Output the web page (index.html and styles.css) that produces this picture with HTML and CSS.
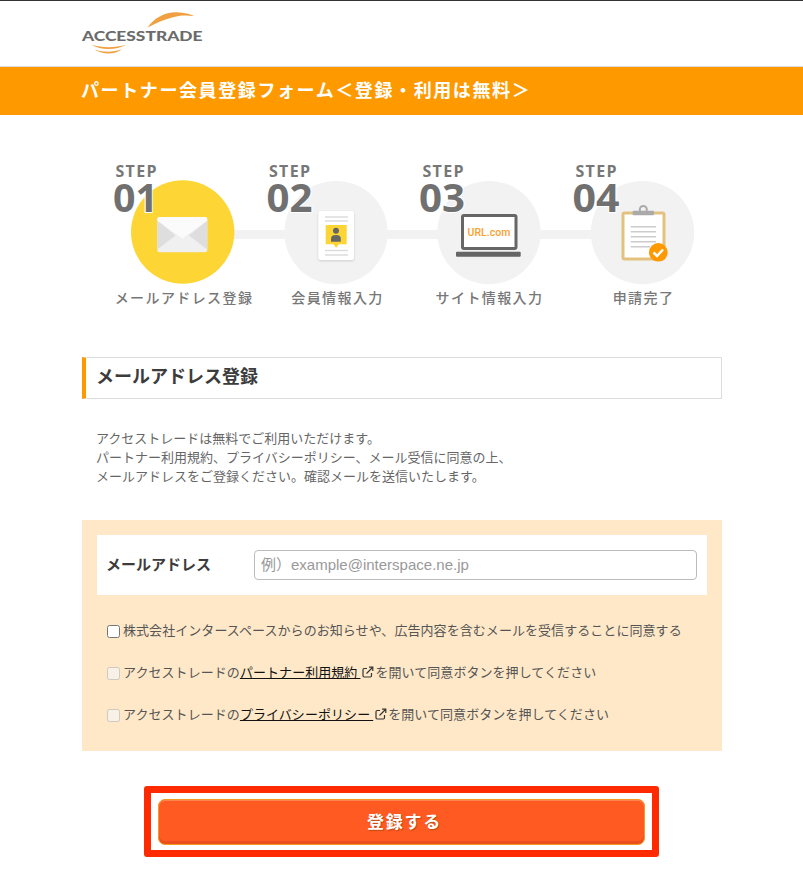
FILE: index.html
```html
<!DOCTYPE html>
<html lang="ja">
<head>
<meta charset="utf-8">
<title>パートナー会員登録フォーム</title>
<link rel="stylesheet" href="styles.css">
</head>
<body>
<header class="site-header">
  <svg class="logo" viewBox="82 8 122 50" width="122" height="50" aria-label="ACCESSTRADE">
    <path class="logo-swoosh" d="M147.500 27.500C154 18 165 12 177 12.300C184 12.500 190 14 194 16C186 15 179 15.200 172 17.500C162 20.500 154 24 147.500 27.500Z"/>
    <text class="logo-text" x="82" y="40.700" textLength="120.500" lengthAdjust="spacingAndGlyphs">ACCESSTRADE</text>
    <path class="logo-swoosh" d="M91 44.500C102 48 115 48 126.500 44.500C116 50.500 101 50.500 91 44.500Z"/>
    <path class="logo-swoosh" d="M94.500 49.500C104 52.500 113 52.500 122 49C115 55 103 55 94.500 49.500Z"/>
  </svg>
</header>
<div class="title-band"><h1 class="title-text">パートナー会員登録フォーム＜登録・利用は無料＞</h1></div>
<main class="content">
  <svg class="steps" viewBox="82 150 640 170" width="640" height="170">
    <rect class="connector" x="183" y="230" width="460" height="9"/>
    <circle class="disc-active" cx="182.700" cy="232" r="51.700"/>
    <circle class="disc" cx="336" cy="232.600" r="51.700"/>
    <circle class="disc" cx="489" cy="232.600" r="51.700"/>
    <circle class="disc" cx="642.500" cy="232.600" r="51.700"/>

    <text class="step-word" x="115.500" y="177" textLength="41">STEP</text>
    <text class="step-num" x="113" y="212" textLength="45" lengthAdjust="spacingAndGlyphs">01</text>
    <text class="step-word" x="269" y="177" textLength="41">STEP</text>
    <text class="step-num" x="266.500" y="212" textLength="46" lengthAdjust="spacingAndGlyphs">02</text>
    <text class="step-word" x="422.500" y="177" textLength="41">STEP</text>
    <text class="step-num" x="419" y="212" textLength="46" lengthAdjust="spacingAndGlyphs">03</text>
    <text class="step-word" x="575.500" y="177" textLength="41">STEP</text>
    <text class="step-num" x="572.500" y="212" textLength="47" lengthAdjust="spacingAndGlyphs">04</text>

    <!-- envelope -->
    <rect class="env-body" x="157.300" y="217" width="50" height="35.300" rx="2.500"/>
    <path class="env-side" d="M157.300 220.500L175.500 235.500L157.300 249.500ZM207.300 220.500L189 235.500L207.300 249.500Z"/>
    <path class="env-flap" d="M159 217H205.500C206.500 217 207.300 218 207.300 219.500V220.500L182.300 238.500L157.300 220.500V219.500C157.300 218 158 217 159 217Z"/>

    <!-- member sheet -->
    <rect class="sheet" x="318.300" y="211" width="35.700" height="49" rx="2"/>
    <path class="sheet-line" d="M325 217H348M325 221H348M325 250.500H348M325 255H348"/>
    <path class="badge" d="M325.700 225H346.700V244.300H339L336.200 247.800L333.400 244.300H325.700Z"/>
    <circle class="person" cx="336" cy="230.700" r="3"/>
    <path class="person" d="M331 241.700V238.500C331 236 333 235 336 235C339 235 340.800 236 340.800 238.500V241.700Z"/>

    <!-- laptop -->
    <rect class="screen" x="462.500" y="215.500" width="53.500" height="33" rx="1.500"/>
    <text class="url-text" x="467.500" y="236" textLength="43">URL.com</text>
    <rect class="laptop-base" x="456" y="251.800" width="64.700" height="5" rx="1"/>

    <!-- clipboard -->
    <rect class="board" x="623" y="213" width="41" height="46" rx="1.500"/>
    <circle class="clip-ring" cx="643.300" cy="209.500" r="3.500"/>
    <rect class="clip" x="632.700" y="210.800" width="21.300" height="4.400" rx="1"/>
    <path class="board-line" d="M630.700 226.700H656M630.700 231.700H656M630.700 236.700H656M630.700 241.700H656M630.700 246.700H650"/>
    <circle class="check-disc" cx="658.300" cy="252.300" r="9.300"/>
    <path class="check-mark" d="M653.500 252.500L657 256L663 249.500"/>

    <text class="step-label" x="184" y="303">メールアドレス登録</text>
    <text class="step-label" x="337.500" y="303">会員情報入力</text>
    <text class="step-label" x="489.500" y="303">サイト情報入力</text>
    <text class="step-label" x="643.500" y="303">申請完了</text>
  </svg>

  <h2 class="section-title">メールアドレス登録</h2>
  <p class="intro">アクセストレードは無料でご利用いただけます。<br>パートナー利用規約、プライバシーポリシー、メール受信に同意の上、<br>メールアドレスをご登録ください。確認メールを送信いたします。</p>

  <form class="form-panel">
    <div class="email-row">
      <label class="email-label" for="email">メールアドレス</label>
      <input class="email-input" id="email" type="email" placeholder="例）example@interspace.ne.jp">
    </div>
    <label class="agree"><input class="agree-box" type="checkbox"><span class="agree-text">株式会社インタースペースからのお知らせや、広告内容を含むメールを受信することに同意する</span></label>
    <label class="agree"><input class="agree-box" type="checkbox" disabled><span class="agree-text">アクセストレードの<a class="doc-link" href="#">パートナー利用規約 <svg class="ext-icon" viewBox="0 0 12 12" width="12" height="12"><path d="M5 2.500H2.200C1.500 2.500 1 3 1 3.700V9.800C1 10.500 1.500 11 2.200 11H8.300C9 11 9.500 10.500 9.500 9.800V7"/><path d="M4.500 7.500L10 2M7 1.200H10.800V5"/></svg></a>を開いて同意ボタンを押してください</span></label>
    <label class="agree"><input class="agree-box" type="checkbox" disabled><span class="agree-text">アクセストレードの<a class="doc-link" href="#">プライバシーポリシー <svg class="ext-icon" viewBox="0 0 12 12" width="12" height="12"><path d="M5 2.500H2.200C1.500 2.500 1 3 1 3.700V9.800C1 10.500 1.500 11 2.200 11H8.300C9 11 9.500 10.500 9.500 9.800V7"/><path d="M4.500 7.500L10 2M7 1.200H10.800V5"/></svg></a>を開いて同意ボタンを押してください</span></label>
  </form>

  <div class="submit-frame"><button class="submit" type="button">登録する</button></div>
</main>
</body>
</html>
```
FILE: styles.css
```css
* { box-sizing: border-box; }
html, body { margin: 0; padding: 0; }
body {
  background: #fff;
  color: #555;
  font-family: "Noto Sans CJK JP", "Noto Sans", sans-serif;
  font-size: 13px;
  border-top: 1px solid #333;
}
.site-header {
  height: 66px;
  padding: 7px 0 0 82px;
  border-bottom: 1px solid #ddd;
}
.logo { display: block; }
.logo-swoosh { fill: #f0a040; }
.logo-text {
  font-family: "Lato", sans-serif;
  font-weight: 900;
  font-size: 14px;
  fill: #6b6b6b;
}
.title-band {
  height: 48px;
  background: #ff9900;
  padding: 0 0 4px 81px;
  display: flex;
  align-items: center;
}
.title-text {
  margin: 0;
  color: #fff;
  font-size: 18px;
  font-weight: 700;
  letter-spacing: 1.600px;
  line-height: 1;
}
.content { width: 640px; margin: 35px 0 0 82px; }
.steps { display: block; }
.connector, .disc { fill: #f2f2f2; }
.disc-active { fill: #fdd535; }
.step-word {
  font-family: "Open Sans", sans-serif;
  font-weight: 700;
  font-size: 16px;
  fill: #777;
}
.step-num {
  font-family: "Open Sans", sans-serif;
  font-weight: 700;
  font-size: 39px;
  fill: #707070;
  stroke: #fff;
  stroke-width: 2px;
  paint-order: stroke;
}
.env-body { fill: #f0f0f0; }
.env-side { fill: #dedede; }
.env-flap { fill: #fbfbfb; }
.sheet { fill: #fff; filter: drop-shadow(0 1px 1px rgba(0,0,0,.15)); }
.sheet-line { stroke: #ddd; stroke-width: 1.500; fill: none; }
.badge { fill: #fdd535; }
.person { fill: #666; }
.screen { fill: #fff; stroke: #666; stroke-width: 3; }
.url-text {
  font-family: "Roboto", sans-serif;
  font-weight: 500;
  font-size: 10.500px;
  fill: #f9a030;
}
.laptop-base { fill: #666; }
.board { fill: #fff; stroke: #e3c27f; stroke-width: 3; }
.clip-ring { fill: none; stroke: #aaa; stroke-width: 2; }
.clip { fill: #aaa; }
.board-line { stroke: #ccc; stroke-width: 1.500; fill: none; }
.check-disc { fill: #f90; }
.check-mark { stroke: #fff; stroke-width: 2.500; fill: none; }
.step-label {
  font-size: 14px;
  letter-spacing: 1.400px;
  fill: #777;
  text-anchor: middle;
  font-weight: 500;
}
.section-title {
  margin: 37px 0 0;
  height: 42px;
  display: flex;
  align-items: center;
  padding: 0 0 7px 10px;
  border: 1px solid #ddd;
  border-left: 4px solid #ff9900;
  font-size: 18px;
  font-weight: 700;
  color: #3c3c3c;
}
.intro {
  margin: 29px 0 0;
  padding-left: 14px;
  line-height: 19px;
  color: #666;
}
.form-panel {
  margin-top: 35px;
  height: 231px;
  background: #fee8c8;
  padding: 15px;
}
.email-row {
  height: 60px;
  background: #fff;
  display: flex;
  align-items: center;
  padding: 0 10px 0 9px;
  margin-bottom: 15px;
}
.email-label {
  width: 148px;
  padding-bottom: 3px;
  font-size: 15px;
  font-weight: 700;
  color: #3c3c3c;
}
.email-input {
  flex: 1;
  height: 30px;
  border: 1px solid #bbb;
  border-radius: 4px;
  padding: 0 6px 2px;
  font-family: "Liberation Sans", "Noto Sans CJK JP", sans-serif;
  font-size: 15px;
  color: #333;
  background: #fff;
}
.email-input::placeholder { color: #999; opacity: 1; }
.agree {
  display: flex;
  align-items: center;
  height: 42px;
  padding-left: 10px;
  color: #555;
  line-height: 19px;
}
.agree-box { margin: 1px 3px 0 0; width: 13px; height: 13px; flex: none; }
.agree-text { letter-spacing: .06px; padding-bottom: 4px; }
.doc-link { color: #111; text-decoration: underline; }
.ext-icon {
  margin: 0 1px 0 2px;
  vertical-align: -1px;
  fill: none;
  stroke: #333;
  stroke-width: 1.200;
}
.submit-frame {
  margin: 35px 0 0 62px;
  width: 515px;
  height: 71px;
  border: 7px solid #ff2a00;
  border-radius: 3px;
  padding: 6px 7px 5px;
}
.submit {
  display: block;
  width: 100%;
  height: 46px;
  padding: 0 0 4px 6px;
  border: 1px solid #f59a20;
  border-radius: 7px;
  background: #ff5a22;
  box-shadow: inset 0 1px 0 #ff8350, inset 0 -3px 0 #e9501d;
  color: #fff;
  font-family: inherit;
  font-size: 17px;
  font-weight: 700;
  letter-spacing: 1.800px;
  text-shadow: 1px 1px 1px rgba(120,60,0,.5);
}
```
